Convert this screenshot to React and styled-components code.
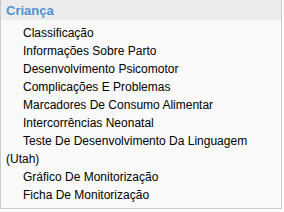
import React from 'react';
import styled, { createGlobalStyle } from 'styled-components';

const GlobalStyle = createGlobalStyle`
    body {
        margin: 0;
        background: #ffffff;
        font-family: "Liberation Sans", Arial, sans-serif;
    }
`;

const Panel = styled.div`
    width: 280px;
    border: 1px solid #c9c9c9;
    border-top: none;
    background: #fafafa;
`;

const Header = styled.div`
    height: 20px;
    background: #ececec;
    padding-left: 5px;
    display: flex;
    align-items: center;
    font-size: 13px;
    font-weight: bold;
    color: #4f8fd3;
`;

const List = styled.ul`
    list-style: none;
    margin: 0;
    padding: 4px 4px 4px 5px;
`;

const Item = styled.li`
    font-size: 12px;
    line-height: 18px;
    text-indent: 17px;
    color: #000;
    cursor: pointer;
`;

const items = [
    'Classificação',
    'Informações Sobre Parto',
    'Desenvolvimento Psicomotor',
    'Complicações E Problemas',
    'Marcadores De Consumo Alimentar',
    'Intercorrências Neonatal',
    'Teste De Desenvolvimento Da Linguagem (Utah)',
    'Gráfico De Monitorização',
    'Ficha De Monitorização'
];

const App = () => {
    return (
        <React.Fragment>
            <GlobalStyle />
            <Panel>
                <Header>Criança</Header>
                <List>
                    {items.map(item => (
                        <Item key={item}>{item}</Item>
                    ))}
                </List>
            </Panel>
        </React.Fragment>
    );
};

export default App;
